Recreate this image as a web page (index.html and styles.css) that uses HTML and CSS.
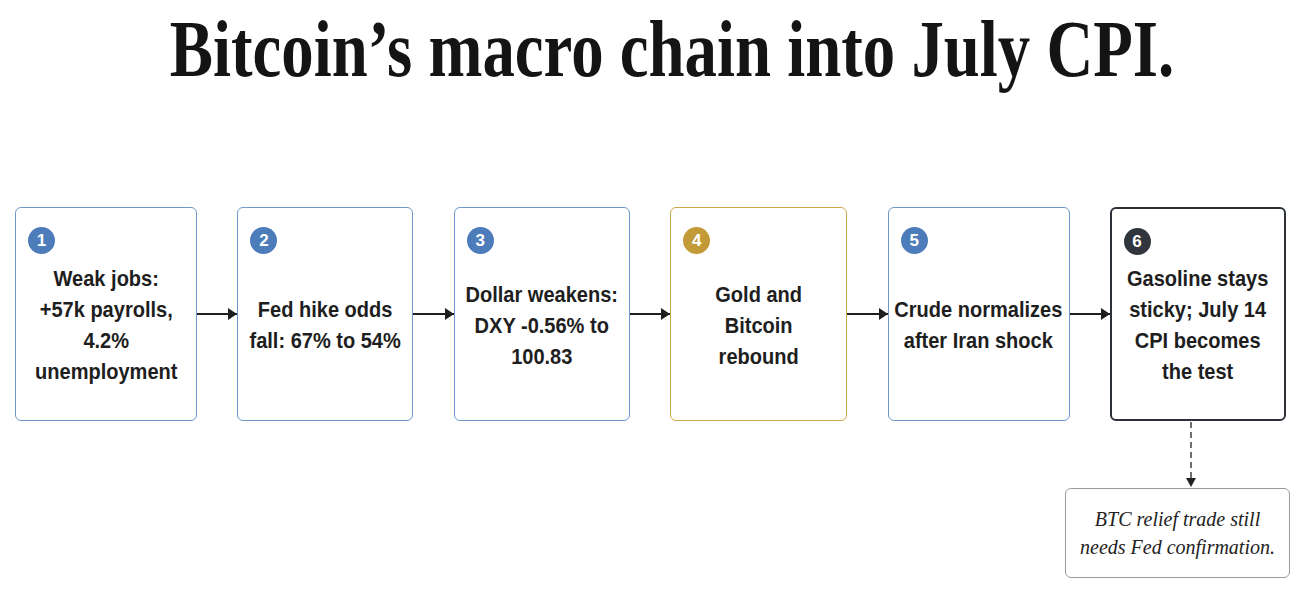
FILE: index.html
```html
<!DOCTYPE html>
<html lang="en">
<head>
<meta charset="utf-8">
<title>Bitcoin’s macro chain into July CPI</title>
<link rel="stylesheet" href="styles.css">
</head>
<body>
<div class="page">
  <h1 class="title"><span class="title-text">Bitcoin’s macro chain into July CPI.</span></h1>

  <div class="flow">
    <div class="step step-blue step-wide">
      <span class="badge">1</span>
      <div class="step-text"><span class="step-label">Weak jobs:<br>+57k payrolls,<br>4.2%<br>unemployment</span></div>
    </div>
    <div class="arrow"></div>
    <div class="step step-blue">
      <span class="badge">2</span>
      <div class="step-text"><span class="step-label">Fed hike odds<br>fall: 67% to 54%</span></div>
    </div>
    <div class="arrow"></div>
    <div class="step step-blue">
      <span class="badge">3</span>
      <div class="step-text"><span class="step-label">Dollar weakens:<br>DXY -0.56% to<br>100.83</span></div>
    </div>
    <div class="arrow"></div>
    <div class="step step-gold">
      <span class="badge">4</span>
      <div class="step-text"><span class="step-label">Gold and<br>Bitcoin<br>rebound</span></div>
    </div>
    <div class="arrow"></div>
    <div class="step step-blue step-wide">
      <span class="badge">5</span>
      <div class="step-text"><span class="step-label">Crude normalizes<br>after Iran shock</span></div>
    </div>
    <div class="arrow"></div>
    <div class="step step-dark">
      <span class="badge">6</span>
      <div class="step-text"><span class="step-label">Gasoline stays<br>sticky; July 14<br>CPI becomes<br>the test</span></div>
    </div>
  </div>

  <div class="below">
    <div class="note-col">
      <svg class="connector" width="225" height="67" viewBox="0 0 225 67">
        <line x1="126" y1="1" x2="126" y2="58" stroke="#333" stroke-width="1.4" stroke-dasharray="6 4"/>
        <polygon points="121,57 131,57 126,66" fill="#222"/>
      </svg>
      <div class="note">BTC relief trade still<br>needs Fed confirmation.</div>
    </div>
  </div>
</div>
</body>
</html>
```

FILE: styles.css
```css
html, body {
  margin: 0;
  padding: 0;
  background: #ffffff;
}

.page {
  width: 1303px;
  height: 594px;
  overflow: hidden;
}

.title {
  margin: 0;
  padding: 9px 0 0 41px;
  text-align: center;
  font-family: "Liberation Serif", "Times New Roman", serif;
  font-weight: bold;
  font-size: 80px;
  line-height: 80px;
  color: #141414;
  white-space: nowrap;
}

.title-text {
  display: inline-block;
  transform: scaleX(0.81);
  transform-origin: center;
}

.flow {
  display: flex;
  align-items: center;
  width: 1271px;
  margin: 118px 0 0 15px;
}

.step {
  flex: 0 0 176px;
  min-width: 0;
  height: 214px;
  box-sizing: border-box;
  border: 1.5px solid #7098c9;
  border-radius: 6px;
  background: #ffffff;
  display: flex;
  flex-direction: column;
  padding: 19px 4px 24px 12px;
}

.step-wide {
  flex-basis: 182px;
}

.step-gold {
  flex-basis: 177px;
  border-color: #cba849;
}

.step-dark {
  border: 2px solid #2c3139;
  padding: 18.5px 3.5px 23.5px 11.5px;
}

.badge {
  align-self: flex-start;
  width: 27px;
  height: 27px;
  border-radius: 50%;
  background: #4c7cba;
  color: #ffffff;
  font-family: "Liberation Sans", Arial, sans-serif;
  font-weight: bold;
  font-size: 17px;
  line-height: 27px;
  text-align: center;
}

.step-gold .badge {
  background: #c39a38;
}

.step-dark .badge {
  background: #31363e;
}

.step-text {
  flex: 1;
  min-width: 0;
  display: flex;
  align-items: center;
  justify-content: center;
  margin-right: 8px;
}

.step-label {
  display: inline-block;
  flex: none;
  white-space: nowrap;
  text-align: center;
  font-family: "Liberation Sans", Arial, sans-serif;
  font-weight: bold;
  font-size: 22px;
  line-height: 31px;
  color: #1e1e1e;
  transform: scaleX(0.91);
}

.arrow {
  flex: 1;
  height: 1.6px;
  background: #1e1e1e;
  position: relative;
}

.arrow::after {
  content: "";
  position: absolute;
  right: 0;
  top: -5px;
  border-left: 9px solid #1e1e1e;
  border-top: 6px solid transparent;
  border-bottom: 6px solid transparent;
}

.below {
  display: flex;
  justify-content: flex-end;
  padding-right: 13px;
}

.note-col {
  width: 225px;
  display: flex;
  flex-direction: column;
}

.connector {
  display: block;
}

.note {
  height: 90px;
  box-sizing: border-box;
  border: 1.3px solid #9a9a9a;
  border-radius: 6px;
  background: #ffffff;
  display: flex;
  align-items: center;
  justify-content: center;
  text-align: center;
  font-family: "Liberation Serif", "Times New Roman", serif;
  font-style: italic;
  font-size: 20px;
  line-height: 28px;
  color: #222222;
}
```
